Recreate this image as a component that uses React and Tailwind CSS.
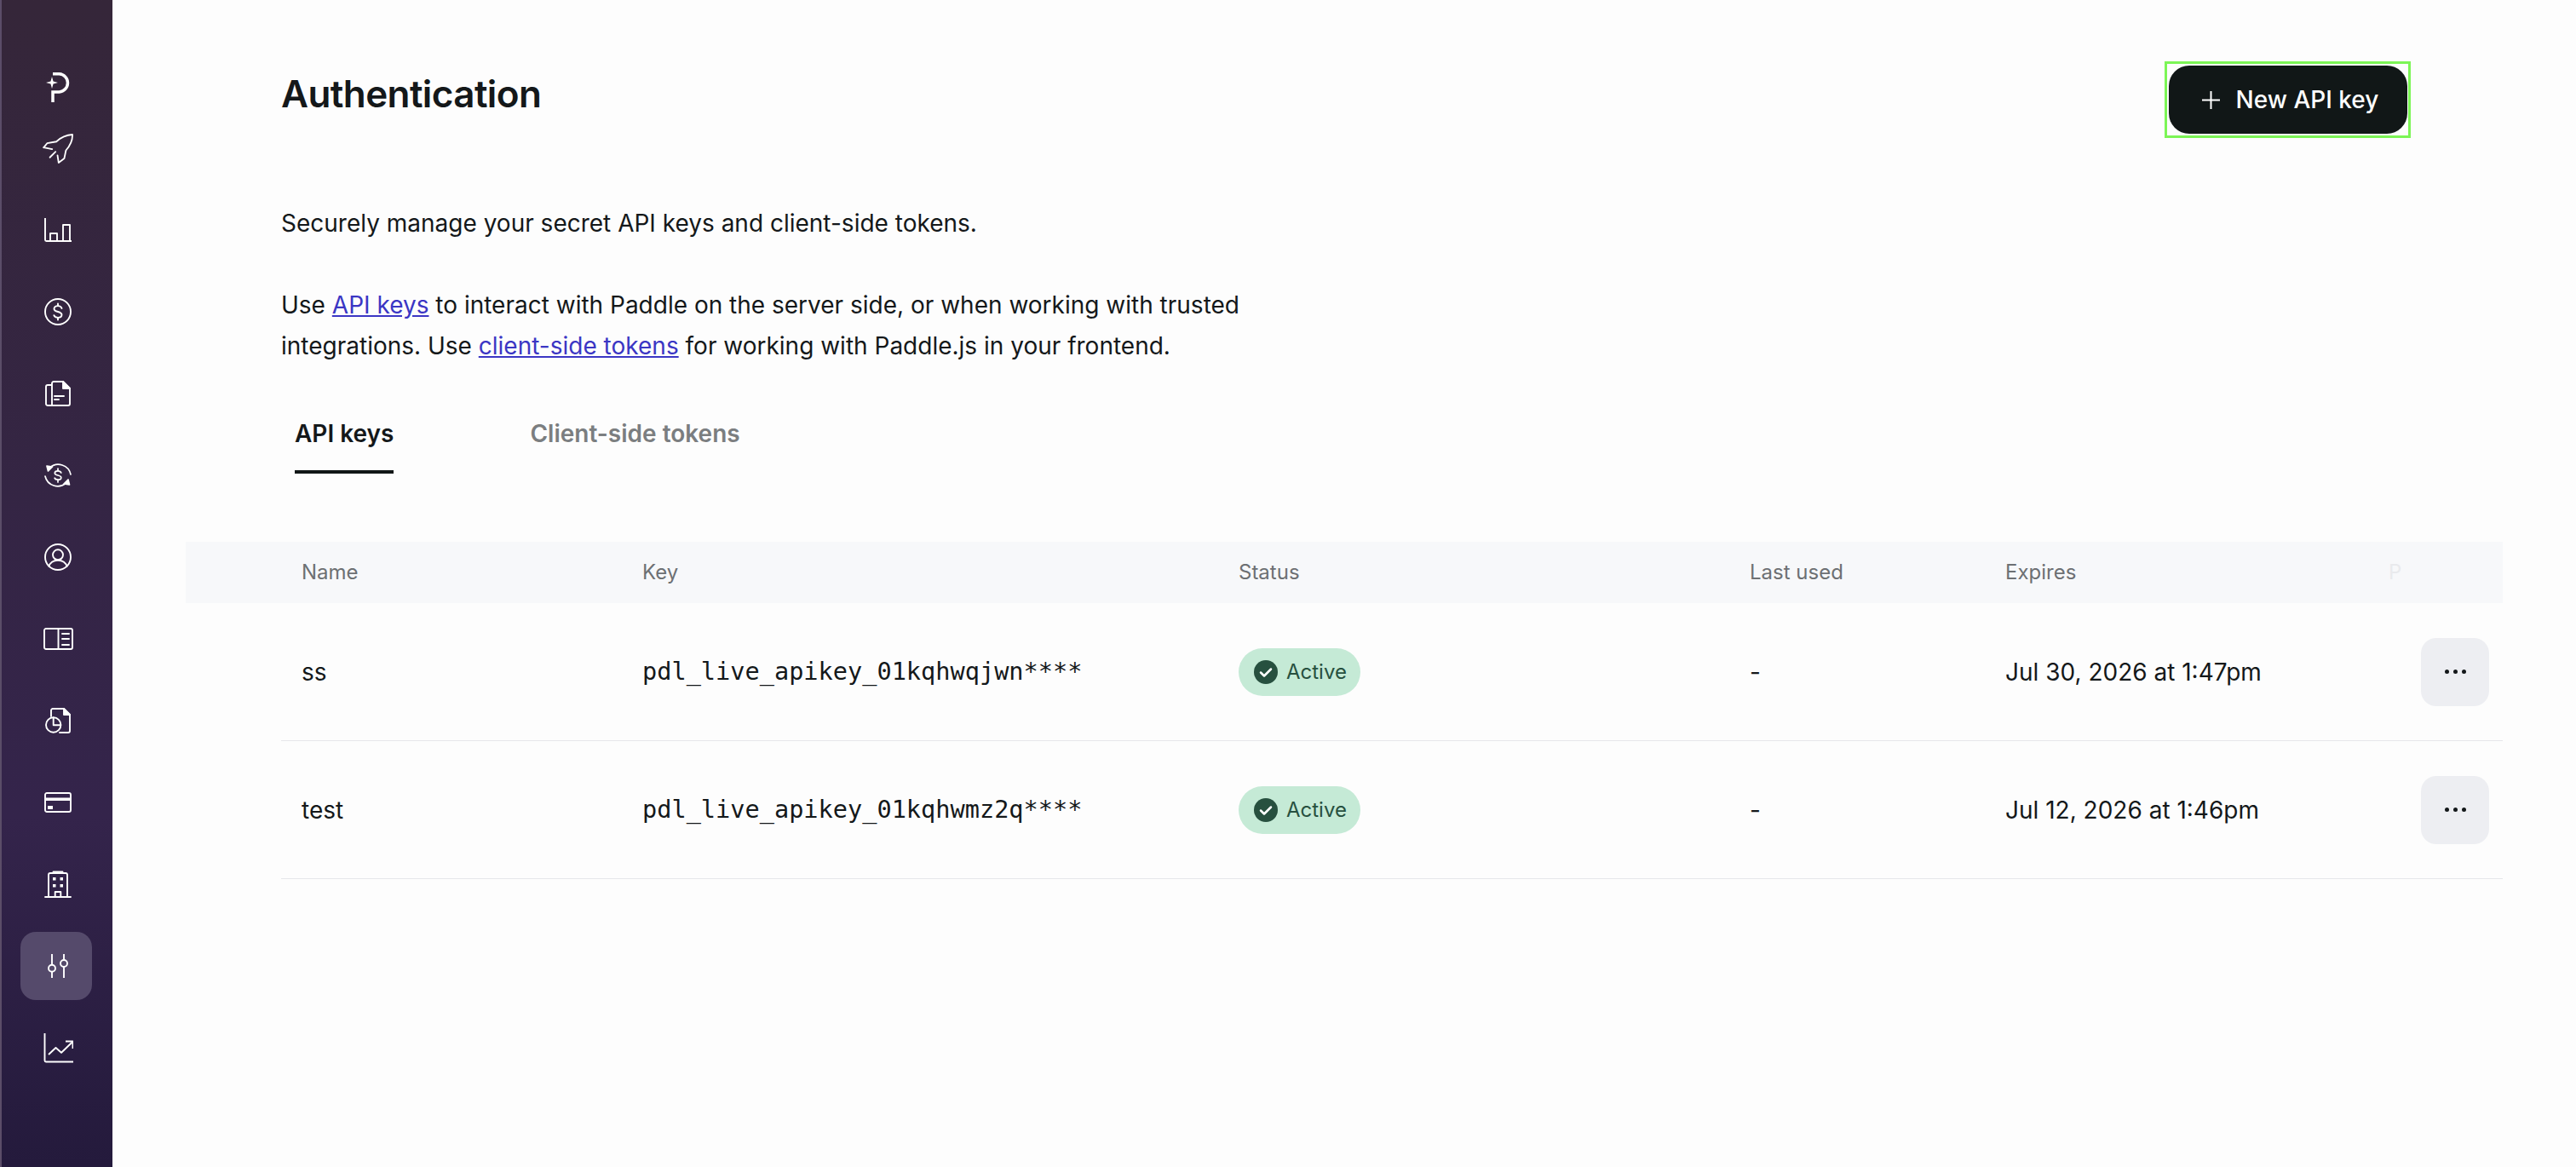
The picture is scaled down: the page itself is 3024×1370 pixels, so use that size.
const stroke = { fill: 'none', stroke: '#ffffff', strokeWidth: 1.9, strokeLinecap: 'round', strokeLinejoin: 'round' }

// sizes come from the sidebar icons in the picture
const navIcons = [
  { label: 'rocket', w: 37, h: 35, box: '150 288 110 106', sw: 5.5, body: (
    <>
      <path d="M153 337L165 322L198 316C215 300 235 292 255 291C256 312 247 330 232 347L226 376L206 391L202 365" />
      <path d="M153 337L183 343" />
      <path d="M175 372L195 352" />
    </>
  ) },
  { label: 'chart', w: 32, h: 28, body: (
    <>
      <path d="M1 0V25.500a1.500 1.500 0 0 0 1.500 1.500H32" />
      <path d="M7 27V18h8v9" />
      <path d="M22 27V8h8v19" />
    </>
  ) },
  { label: 'dollar', w: 32, h: 32, body: (
    <>
      <circle cx="16" cy="16" r="15" />
      <path d="M20.500 12c-.5-1.800-2.100-2.900-4.500-2.900-2.700 0-4.500 1.400-4.500 3.300 0 4.600 9 2.600 9 7.200 0 2-1.900 3.300-4.500 3.300-2.600 0-4.200-1.100-4.700-2.800" />
      <path d="M16 6.500V9M16 23v2.500" />
    </>
  ) },
  { label: 'docs', w: 30, h: 30, body: (
    <>
      <path d="M8 29V3a2 2 0 0 1 2-2H21l8 8V27a2 2 0 0 1-2 2H3a2 2 0 0 1-2-2V7a2 2 0 0 1 2-2h5" />
      <path d="M21 1v8h8z" fill="#ffffff" />
      <path d="M11 18h11M11 22h5" />
    </>
  ) },
  { label: 'subscription', w: 32, h: 32, sw: 1.7, body: (
    <>
      <path d="M6.500 7A15 15 0 0 1 31 15" />
      <path d="M25.500 25A15 15 0 0 1 1 17" />
      <path d="M3 5l6.500 1-5 5z" fill="#ffffff" />
      <path d="M29.500 27l-6.500-1 5-5z" fill="#ffffff" />
      <path d="M19.800 13c-.5-1.300-1.800-2.100-3.800-2.100-2.200 0-3.700 1-3.700 2.500 0 3.400 7.500 1.900 7.500 5.300 0 1.500-1.600 2.500-3.800 2.500s-3.400-.8-3.900-2" />
      <path d="M16 8v2.500M16 21.500v2.500" />
    </>
  ) },
  { label: 'customer', w: 32, h: 32, body: (
    <>
      <circle cx="16" cy="16" r="15" />
      <circle cx="16" cy="13.300" r="6" />
      <path d="M5.500 27c1-4 5-7.300 10.500-7.300s9.500 3.300 10.500 7.300" />
    </>
  ) },
  { label: 'catalog', w: 35, h: 26, body: (
    <>
      <rect x="1" y="1" width="33" height="24" rx="2" />
      <path d="M17.500 1v24" />
      <path d="M22 7h8M22 13h8M22 20h8" />
    </>
  ) },
  { label: 'report', w: 30, h: 30, body: (
    <>
      <path d="M7 10V3a2 2 0 0 1 2-2H22l7 7V27a2 2 0 0 1-2 2H17" />
      <path d="M22 1v7h7z" fill="#ffffff" />
      <circle cx="9.700" cy="20" r="8.700" />
      <path d="M9.700 11.500v8.700h8.500" />
    </>
  ) },
  { label: 'card', w: 32, h: 24, body: (
    <>
      <rect x="1" y="1" width="30" height="22" rx="2" />
      <rect x="1" y="6.500" width="30" height="3.500" fill="#ffffff" stroke="none" />
      <rect x="4" y="16" width="6" height="4" fill="#ffffff" stroke="none" />
    </>
  ) },
  { label: 'building', w: 32, h: 32, body: (
    <>
      <path d="M1 31h30" />
      <path d="M5 31V5a2 2 0 0 1 2-2H25a2 2 0 0 1 2 2V31" />
      <path d="M10.500 1.500h11" />
      <rect x="10" y="8" width="3.500" height="3.500" fill="#ffffff" stroke="none" />
      <rect x="18.500" y="8" width="3.500" height="3.500" fill="#ffffff" stroke="none" />
      <rect x="10" y="16" width="3.500" height="3.500" fill="#ffffff" stroke="none" />
      <rect x="18.500" y="16" width="3.500" height="3.500" fill="#ffffff" stroke="none" />
      <path d="M12.700 31v-6h6.600v6" />
    </>
  ) },
]

const rows = [
  { name: 'ss', key: 'pdl_live_apikey_01kqhwqjwn****', expires: 'Jul 30, 2026 at 1:47pm' },
  { name: 'test', key: 'pdl_live_apikey_01kqhwmz2q****', expires: 'Jul 12, 2026 at 1:46pm' },
]

function Sidebar() {
  return (
    <aside className="w-[132px] shrink-0 h-[1370px] flex flex-col pl-[2px] pt-[85px] border-l-2 border-[#5b4d68] bg-gradient-to-b from-[#352639] via-[#34244b] via-70% to-[#241a3c]">
      <div className="h-[35px] flex justify-center">
        <svg width="28" height="35" viewBox="0 0 28 35" fill="none" stroke="#ffffff" strokeWidth="3.500">
          <path d="M8 35V22.900H15.600A10.600 10.600 0 0 0 15.600 1.750H8" />
          <path d="M7 5L8.500 10.500L14 12L8.500 13.500L7 19L5.500 13.500L0 12L5.500 10.500Z" fill="#ffffff" stroke="none" />
        </svg>
      </div>
      <div className="flex flex-col mt-[6px]">
        {navIcons.map((icon) => (
          <div key={icon.label} className="h-[96px] flex items-center justify-center">
            <svg width={icon.w} height={icon.h} viewBox={icon.box || `0 0 ${icon.w} ${icon.h}`} {...stroke} strokeWidth={icon.sw || stroke.strokeWidth}>
              {icon.body}
            </svg>
          </div>
        ))}
        <div className="h-[96px] flex items-center justify-center">
          <div className="h-[80px] w-[84px] mr-[4px] pl-[4px] rounded-[18px] bg-[#554a6b] flex items-center justify-center">
            <svg width="24" height="28" viewBox="0 0 24 28" {...stroke}>
              <path d="M5 0v28M19 0v28" strokeLinecap="butt" />
              <circle cx="5" cy="16.700" r="4" fill="#554a6b" />
              <circle cx="19" cy="11" r="4" fill="#554a6b" />
            </svg>
          </div>
        </div>
        <div className="h-[96px] flex items-center justify-center">
          <svg width="35" height="35" viewBox="0 0 35 35" {...stroke} strokeLinecap="butt">
            <path d="M1.500 0V32a1.500 1.500 0 0 0 1.500 1.500H35" />
            <path d="M6 25L14.500 17L21 22.700L34 10.300" />
            <path d="M26 9.500H34.500V18" />
          </svg>
        </div>
      </div>
    </aside>
  )
}

function ApiRow({ row }) {
  return (
    <div className="ml-[112px] pl-[24px] h-[162px] grid grid-cols-[400px_700px_600px_300px_450px_1fr] items-center border-b border-[#e6e7ea] text-[#14181a] text-[28px]">
      <div>{row.name}</div>
      <div className="font-['DejaVu_Sans_Mono',monospace] text-[28.600px]">{row.key}</div>
      <div>
        <span className="inline-flex items-center gap-[10px] h-[56px] pl-[18px] pr-[16px] rounded-full bg-[#c5ead6] text-[#27503f] text-[24px]">
          <svg width="28" height="28" viewBox="0 0 28 28">
            <circle cx="14" cy="14" r="14" fill="#27503f" />
            <path d="M8 14.500l4 4 8-8" fill="none" stroke="#ffffff" strokeWidth="2.500" strokeLinecap="round" strokeLinejoin="round" />
          </svg>
          Active
        </span>
      </div>
      <div>-</div>
      <div>{row.expires}</div>
      <button className="justify-self-end mr-[16px] w-[80px] h-[80px] rounded-[18px] bg-[#edeef2] flex items-center justify-center gap-[5px]">
        <span className="w-[5px] h-[5px] rounded-full bg-[#14181a]"></span>
        <span className="w-[5px] h-[5px] rounded-full bg-[#14181a]"></span>
        <span className="w-[5px] h-[5px] rounded-full bg-[#14181a]"></span>
      </button>
    </div>
  )
}

export default function App() {
  return (
    <div className="flex h-[1370px] bg-[#fdfdfd] font-['Inter',sans-serif] overflow-hidden">
      <Sidebar />
      <main className="flex-1 pl-[86px] pr-[86px]">
        <div className="pl-[112px]">
          <div className="flex justify-between items-start pt-[72px] pr-[108px]">
            <h1 className="text-[44px] leading-[76px] font-semibold tracking-[-0.0135em] text-[#14181a]">Authentication</h1>
            <div className="border-[3px] border-[#7cf556] pl-[2px] pr-[1px] py-[2px]">
              <button className="h-[80px] w-[280px] pl-[5px] rounded-[24px] bg-[#111717] text-white text-[28px] font-medium flex items-center justify-center gap-[19px]">
                <svg width="21" height="21" viewBox="0 0 21 21" fill="none" stroke="#ffffff" strokeWidth="2"><path d="M10.500 0v21M0 10.500h21" /></svg>
                New API key
              </button>
            </div>
          </div>
          <div className="mt-[76px] text-[28px] leading-[48px] text-[#14181a] w-[1200px]">
            <p>Securely manage your secret API keys and client-side tokens.</p>
            <p className="mt-[48px]">
              Use <a className="text-[#3b36c4] underline">API keys</a> to interact with Paddle on the server side, or when working with trusted
              <br />
              integrations. Use <a className="text-[#3b36c4] underline">client-side tokens</a> for working with Paddle.js in your frontend.
            </p>
          </div>
          <div className="mt-[55px] flex pl-[16px] gap-[160px] text-[28px] font-semibold">
            <div className="pb-[19px] border-b-4 border-[#111717] leading-[48px] text-[#14181a]">API keys</div>
            <div className="leading-[48px] text-[#7b7e80]">Client-side tokens</div>
          </div>
        </div>
        <div className="mt-[80px]">
          <div className="h-[72px] pl-[136px] grid grid-cols-[400px_700px_600px_300px_450px_1fr] items-center bg-[#f7f8fa] text-[24px] text-[#6d7073]">
            <div>Name</div>
            <div>Key</div>
            <div>Status</div>
            <div>Last used</div>
            <div>Expires</div>
            <div className="text-[#e9eaed]">P</div>
          </div>
          {rows.map((row) => (
            <ApiRow key={row.name} row={row} />
          ))}
        </div>
      </main>
    </div>
  )
}
